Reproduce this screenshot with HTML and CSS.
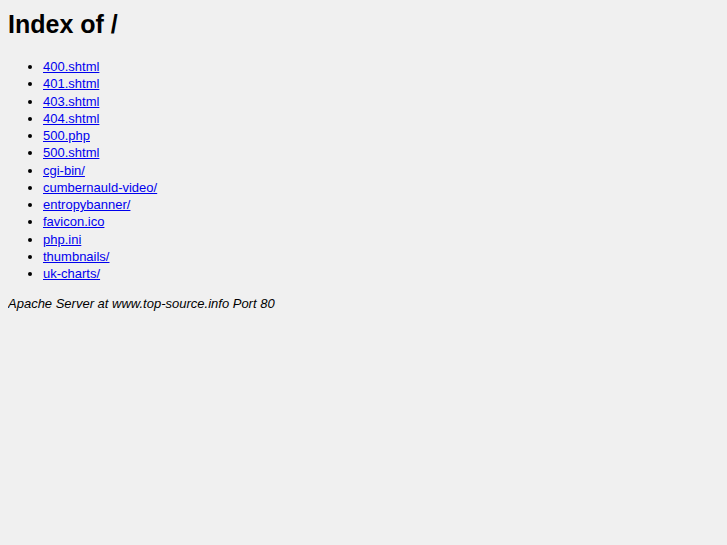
FILE: index.html
```html
<!DOCTYPE html>
<html>
<head>
    <meta charset="UTF-8">
    <title>Index of /</title>
    <link rel="stylesheet" href="styles.css">
</head>
<body>
    <h1>Index of /</h1>
    <ul class="listing">
        <li><a href="400.shtml">400.shtml</a></li>
        <li><a href="401.shtml">401.shtml</a></li>
        <li><a href="403.shtml">403.shtml</a></li>
        <li><a href="404.shtml">404.shtml</a></li>
        <li><a href="500.php">500.php</a></li>
        <li><a href="500.shtml">500.shtml</a></li>
        <li><a href="cgi-bin/">cgi-bin/</a></li>
        <li><a href="cumbernauld-video/">cumbernauld-video/</a></li>
        <li><a href="entropybanner/">entropybanner/</a></li>
        <li><a href="favicon.ico">favicon.ico</a></li>
        <li><a href="php.ini">php.ini</a></li>
        <li><a href="thumbnails/">thumbnails/</a></li>
        <li><a href="uk-charts/">uk-charts/</a></li>
    </ul>
    <address>Apache Server at www.top-source.info Port 80</address>
</body>
</html>
```

FILE: styles.css
```css
body {
    margin: 8px;
    background: #f0f0f0;
    color: #000;
    font-family: 'Liberation Sans', Arial, sans-serif;
    font-size: 13px;
}

h1 {
    font-size: 25px;
    line-height: 30px;
    margin: 1px 0 19px;
}

.listing {
    margin: 0 0 13px;
    padding-left: 35px;
    line-height: 17.25px;
}

.listing a {
    color: #0000ee;
}

address {
    font-style: italic;
    line-height: 17px;
}
```
